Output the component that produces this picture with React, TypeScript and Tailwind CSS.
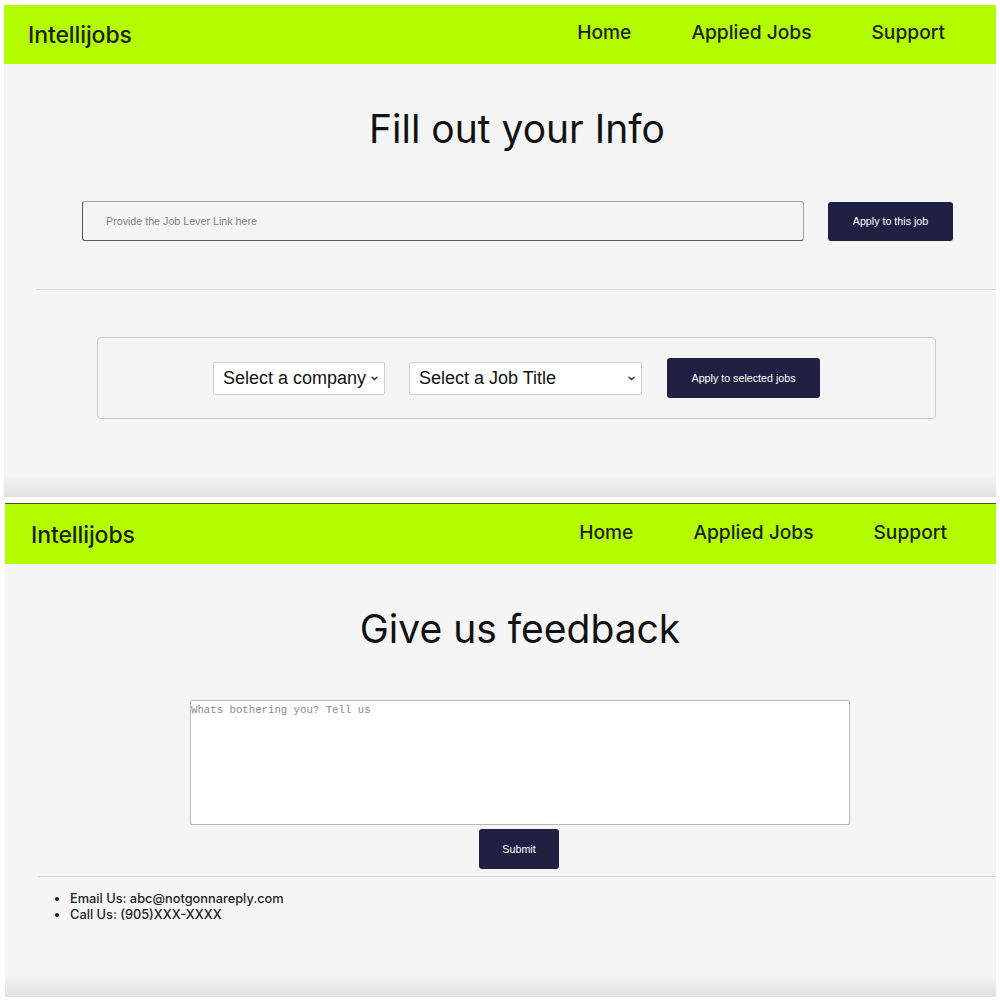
import React from 'react'

const navLinks = ['Home', 'Applied Jobs', 'Support']

function Chevron() {
  return (
    <svg width="7" height="5" viewBox="0 0 7 5" className="shrink-0">
      <path d="M1 1.2 L3.5 3.6 L6 1.2" fill="none" stroke="#333" strokeWidth="1.4" strokeLinecap="round" />
    </svg>
  )
}

function Header({ padLeft, padRight }: { padLeft: string; padRight: string }) {
  return (
    <div className={`flex items-center justify-between bg-[#b4fc00] text-[#1c1f12] font-['Inter',sans-serif] ${padLeft} ${padRight}`}>
      <span className="pt-[2px] text-[23px] font-medium tracking-[-0.1px]">Intellijobs</span>
      <nav className="pb-[3px] flex items-center gap-[60px] text-[19.2px] font-medium">
        {navLinks.map((link) => (
          <a key={link} href="#" className="leading-none">
            {link}
          </a>
        ))}
      </nav>
    </div>
  )
}

function Shade() {
  return <div className="h-[22px] bg-gradient-to-b from-[#f5f5f5] to-[#e1e1e1]" />
}

export default function App() {
  return (
    <div className="w-[1000px] h-[1000px] bg-white overflow-hidden">
      {/* Apply page */}
      <div className="ml-[4px] mt-[5px] w-[992px] h-[492px] flex flex-col">
        <div className="h-[59px] flex flex-col">
          <Header padLeft="pl-[24px] h-full" padRight="pr-[51px]" />
        </div>
        <div className="flex-1 bg-[#f5f5f5] flex flex-col">
          <h1 className="mt-[42px] text-center text-[39px] leading-[46px] text-[#111] font-['Inter',sans-serif] pl-[34px]">
            Fill out your Info
          </h1>

          <div className="mt-[49px] pl-[78px] flex items-center gap-[24px]">
            <input
              type="text"
              placeholder="Provide the Job Lever Link here"
              className="w-[722px] h-[40px] rounded-[3px] border border-[#a0a0a8] border-l-[#55555c] border-b-[#55555c] bg-transparent pl-[23px] text-[10.7px] font-['Liberation_Sans',Arial,sans-serif] placeholder:text-[#808080] outline-none"
            />
            <button className="w-[125px] h-[39px] rounded-[3px] bg-[#1f2042] text-white text-[10.7px] font-['Liberation_Sans',Arial,sans-serif]">
              Apply to this job
            </button>
          </div>

          <div className="mt-[48px] ml-[32px] border-t border-[#dcdcdc]" />

          <div className="mt-[47px] ml-[93px] w-[839px] h-[82px] rounded-[4px] border border-[#c9c9c9] flex items-center justify-center gap-[24px] font-['Liberation_Sans',Arial,sans-serif]">
            <div className="w-[172px] h-[33px] bg-white border border-[#cfcfcf] rounded-[2px] flex items-center justify-between pl-[9px] pr-[6px] text-[18px] text-[#111]">
              <span>Select a company</span>
              <Chevron />
            </div>
            <div className="w-[233px] h-[33px] bg-white border border-[#cfcfcf] rounded-[2px] flex items-center justify-between pl-[9px] pr-[6px] text-[18px] text-[#111]">
              <span>Select a Job Title</span>
              <Chevron />
            </div>
            <button className="ml-px w-[153px] h-[40px] rounded-[3px] bg-[#1f2042] text-white text-[10.7px]">
              Apply to selected jobs
            </button>
          </div>

          <div className="flex-1" />
          <Shade />
        </div>
      </div>

      {/* Feedback page */}
      <div className="ml-[5px] mt-[6px] w-[991px] h-[494px] flex flex-col border-t border-[#4d5a1e]">
        <div className="h-[60px] flex flex-col">
          <Header padLeft="pl-[26px] h-full" padRight="pr-[49px]" />
        </div>
        <div className="flex-1 bg-[#f5f5f5] flex flex-col">
          <h1 className="mt-[42px] text-center text-[39px] leading-[46px] text-[#111] font-['Inter',sans-serif] pl-[39px]">
            Give us feedback
          </h1>

          <textarea
            placeholder="Whats bothering you? Tell us"
            className="mt-[48px] ml-[185px] w-[660px] h-[125px] resize-none bg-white border border-[#b9b9b9] rounded-[2px] px-[0px] pt-[3px] text-[10.7px] leading-[13px] font-['Liberation_Mono','Courier_New',monospace] placeholder:text-[#8a8a8a] outline-none"
          />

          <button className="mt-[4px] ml-[474px] w-[80px] h-[40px] rounded-[3px] bg-[#1f2042] text-white text-[10.7px] font-['Liberation_Sans',Arial,sans-serif]">
            Submit
          </button>

          <div className="mt-[7px] ml-[33px] border-t border-[#d6d6d6]" />

          <ul className="mt-[14px] ml-[65px] list-disc pl-0 text-[12.8px] leading-[16px] font-medium text-[#1e1e1e] font-['Inter',sans-serif] marker:text-[12px]">
            <li>Email Us: abc@notgonnareply.com</li>
            <li>Call Us: (905)XXX-XXXX</li>
          </ul>

          <div className="flex-1" />
          <Shade />
        </div>
      </div>
    </div>
  )
}
